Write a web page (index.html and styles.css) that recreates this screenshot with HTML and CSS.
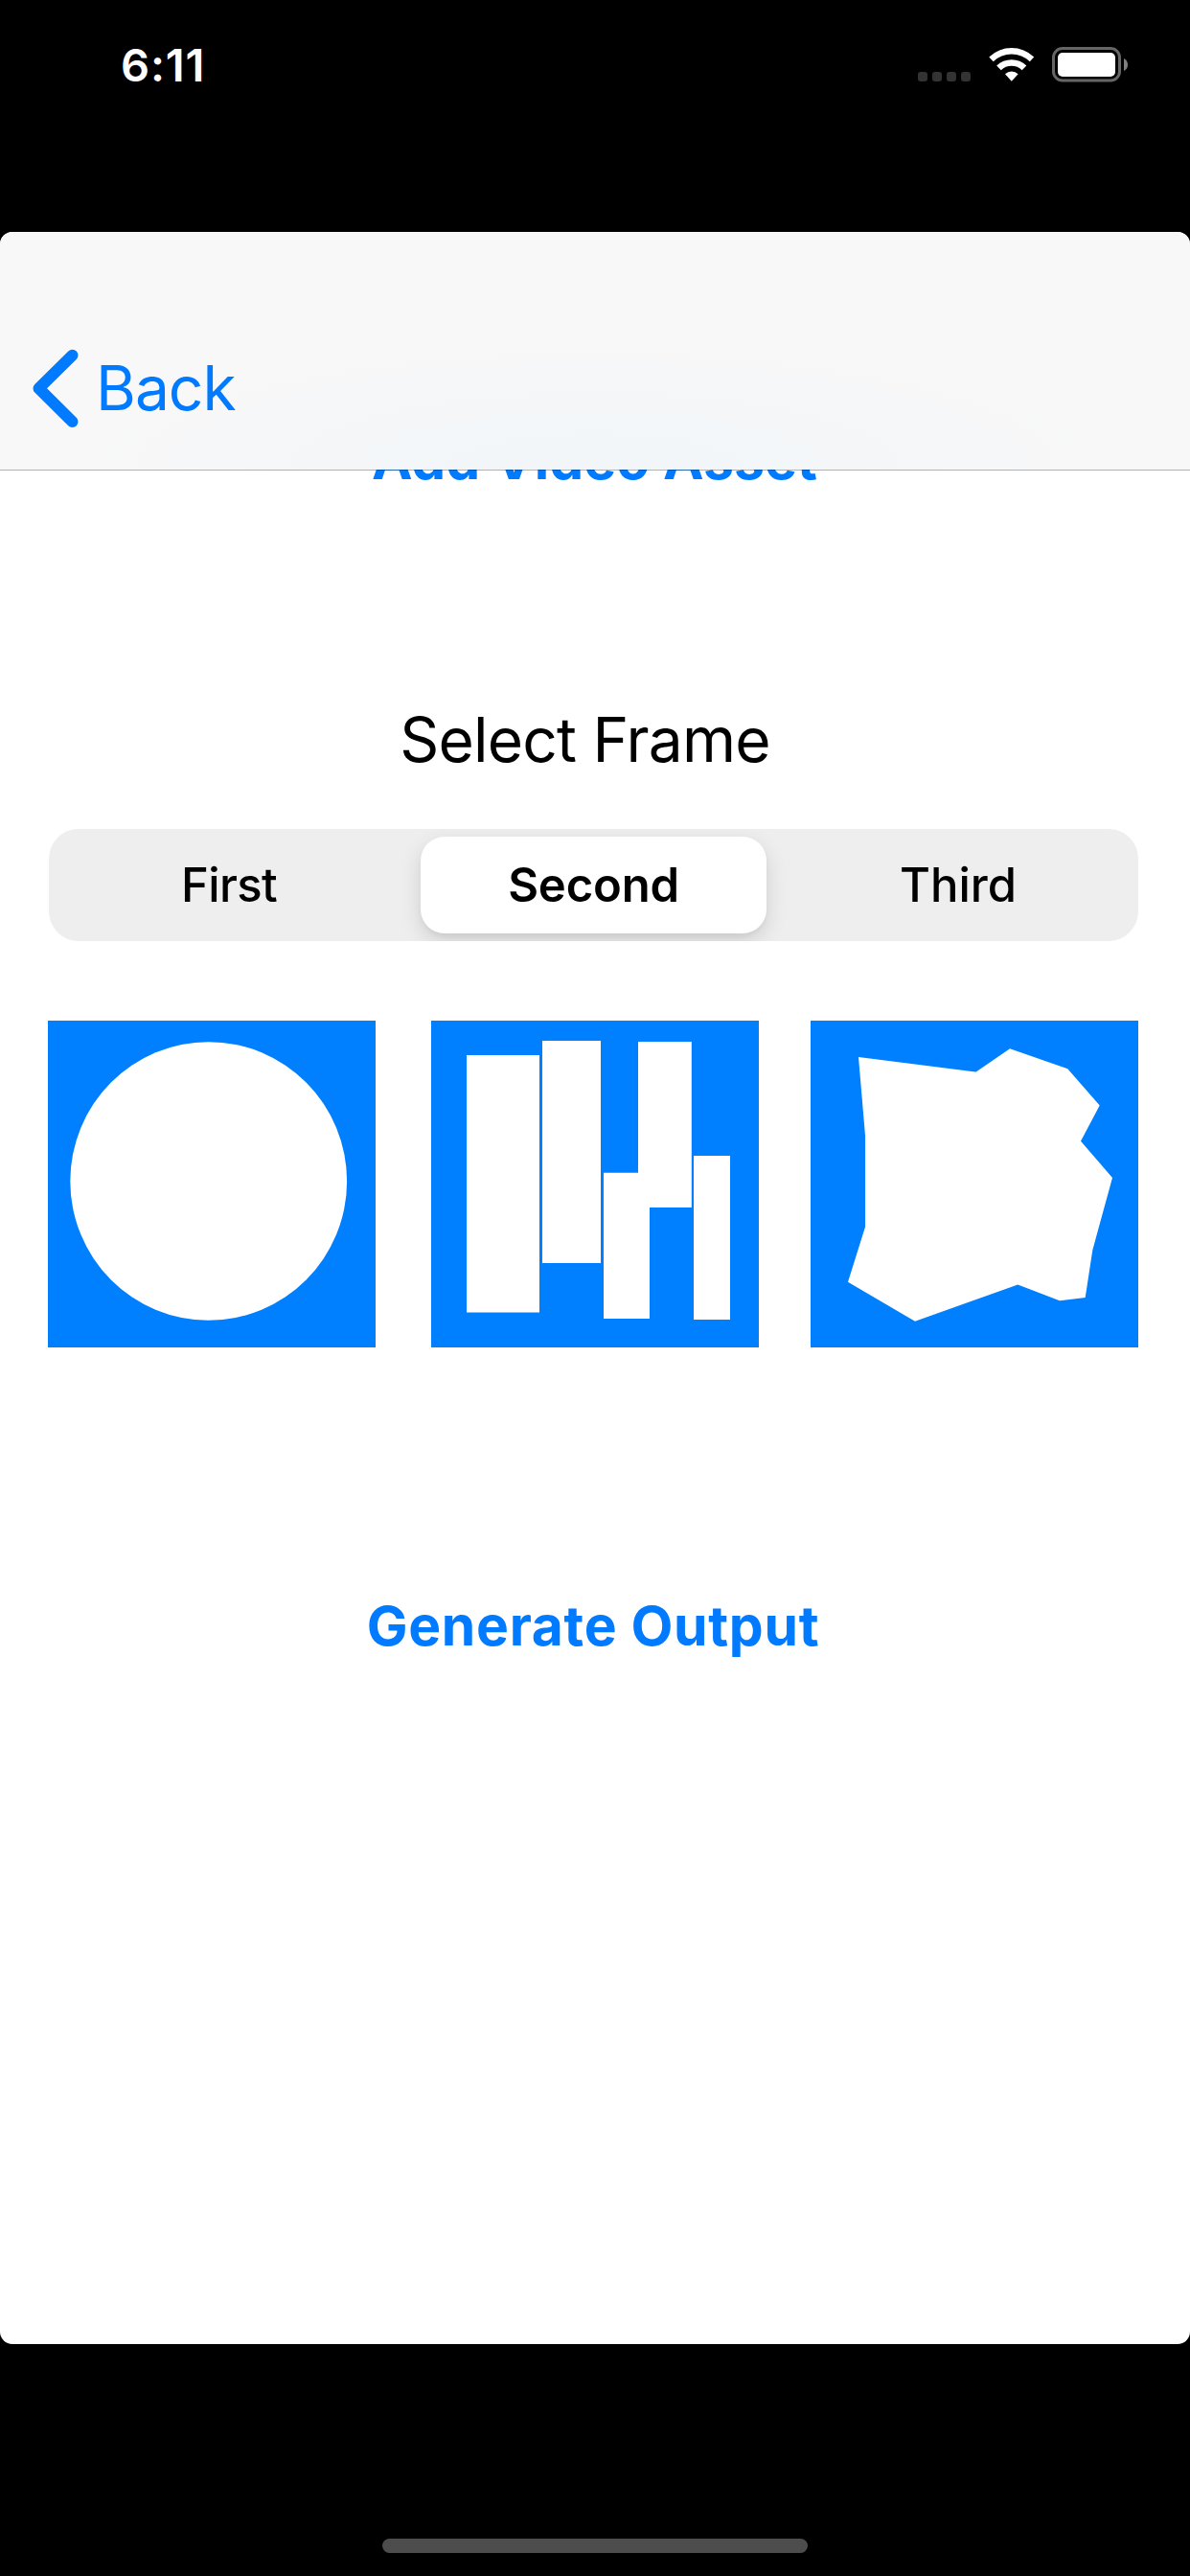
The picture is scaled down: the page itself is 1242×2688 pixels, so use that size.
FILE: index.html
```html
<!DOCTYPE html>
<html lang="en">
<head>
<meta charset="utf-8">
<title>Select Frame</title>
<link rel="stylesheet" href="styles.css">
</head>
<body>
<div class="screen">
  <header class="status">
    <span class="time">6:11</span>
    <span class="indicators">
      <svg class="signal" width="55" height="10" viewBox="0 0 55 10" fill="#333"><rect width="10" height="10" rx="3"/><rect x="15" width="10" height="10" rx="3"/><rect x="30" width="10" height="10" rx="3"/><rect x="45" width="10" height="10" rx="3"/></svg>
      <svg class="wifi" width="48" height="36" viewBox="0 0 48 36" fill="#fff"><path d="M0.3 10.5 A34 34 0 0 1 47.2 10.5 L42.8 15.2 A27.6 27.6 0 0 0 4.7 15.2 Z"/><path d="M8.2 19.4 A22.5 22.5 0 0 1 39.3 19.4 L34.7 24.2 A16 16 0 0 0 12.8 24.2 Z"/><path d="M17 28.3 A9.8 9.8 0 0 1 30.6 28.3 L23.8 35.8 Z"/></svg>
      <svg class="battery" width="80" height="37" viewBox="0 0 80 37"><rect x="1.5" y="1.5" width="69" height="33.5" rx="9.5" fill="none" stroke="#666" stroke-width="3"/><rect x="6" y="6" width="60" height="25" rx="5" fill="#fff"/><path d="M75 12 Q79 14 79 18.5 Q79 23 75 25 Z" fill="#808080"/></svg>
    </span>
  </header>
  <main class="panel">
    <nav class="nav">
      <svg class="chevron" width="50" height="84" viewBox="0 0 50 84" fill="none" stroke="#007aff" stroke-width="12" stroke-linecap="round" stroke-linejoin="round"><path d="M43.5 7.8 L8.5 42.3 L43.5 77"/></svg>
      <span class="back">Back</span>
    </nav>
    <div class="content">
      <div class="action add"><span>Add Video Asset</span></div>
      <h1 class="title"><span>Select Frame</span></h1>
      <div class="segments">
        <div class="segment first"><span>First</span></div>
        <div class="segment selected"><span>Second</span></div>
        <div class="segment third"><span>Third</span></div>
      </div>
      <div class="frames">
        <svg class="frame" width="342" height="341" viewBox="0 0 342 341"><ellipse cx="167.7" cy="167.5" rx="144.4" ry="145.3"/></svg>
        <svg class="frame" width="342" height="341" viewBox="0 0 342 341"><path d="M37 36h76v268.6h-76zM116 21h61v232h-61zM180 158.8h36V22h55.8v173H228v116h-48zM274 141h38v171h-38z"/></svg>
        <svg class="frame" width="342" height="341" viewBox="0 0 342 341"><polygon points="50,38 172.7,53.6 208,29.2 268.3,50.3 301.7,88.4 282,125.8 315,163.9 294.3,239.4 286.7,288.9 260,292.3 216.3,275.6 109,313.7 39,272.7 57,215.3 57,120"/></svg>
      </div>
      <div class="action generate"><span>Generate Output</span></div>
    </div>
  </main>
  <div class="home"></div>
</div>
</body>
</html>
```
FILE: styles.css
```css
* { box-sizing: border-box; }
body { margin: 0; background: #000; font-family: Inter, "Liberation Sans", sans-serif; }
.screen { width: 1242px; height: 2688px; display: flex; flex-direction: column; background: #000; overflow: hidden; }
.status { height: 242px; padding: 38px 64px 0 126px; display: flex; justify-content: space-between; align-items: flex-start; color: #fff; }
.time { font-size: 47px; line-height: 60px; font-weight: 570; letter-spacing: 0.9px; }
.indicators { display: flex; align-items: flex-start; padding-top: 11px; }
.signal { margin-top: 26px; margin-right: 19px; }
.wifi { margin-right: 18px; }
.panel { height: 2204px; background: #fff; border-radius: 13px; overflow: hidden; display: flex; flex-direction: column; }
.nav { position: relative; height: 248px; flex: none; padding: 121px 0 0 32px; display: flex; align-items: flex-start; background: radial-gradient(ellipse 520px 130px at 50% 100%, #f2f6f8 0%, #f4f6f8 50%, #f8f8f8 100%); }
.nav::after { content: ""; position: absolute; left: 0; right: 0; top: 248px; height: 1px; background: rgba(0, 0, 0, 0.3); }
.back { margin: 3px 0 0 18px; font-size: 64px; line-height: 78px; letter-spacing: -1px; color: #007aff; }
.content { flex: 1; overflow: hidden; padding: 0 54px 0 50px; display: flex; flex-direction: column; }
.action { color: #007aff; font-size: 57px; line-height: 70px; font-weight: 700; text-align: center; white-space: nowrap; }
.add { margin-top: -45px; padding-left: 3px; letter-spacing: 0.1px; }
.title { margin: 218px 0 0; padding-right: 17px; text-align: center; font-size: 64px; line-height: 78px; font-weight: 400; letter-spacing: -0.8px; color: #000; }
.segments { margin: 54px 0 0 1px; height: 117px; flex: none; border-radius: 31px; background: #eee; display: grid; grid-template-columns: 388px 361px 388px; align-items: center; overflow: hidden; font-size: 49px; font-weight: 500; line-height: 101px; text-align: center; }
.selected { height: 101px; border-radius: 25px; background: #fff; font-weight: 600; letter-spacing: -0.2px; box-shadow: 0 8px 22px rgba(0, 0, 0, 0.13), 0 4px 4px rgba(0, 0, 0, 0.04); }
.first { padding-right: 12px; letter-spacing: -0.6px; }
.third { padding-left: 12px; }
.frames { margin-top: 83px; display: grid; grid-template-columns: 342px 342px 342px; column-gap: 58px; }
.frame { display: block; background: #0080ff; fill: #fff; }
.frame:last-child { margin-left: -4px; }
.generate { margin-top: 256px; letter-spacing: 0.7px; }
.home { width: 444px; height: 15px; margin: 203px 0 0 399px; border-radius: 8px; background: #4d4d4d; }
```
